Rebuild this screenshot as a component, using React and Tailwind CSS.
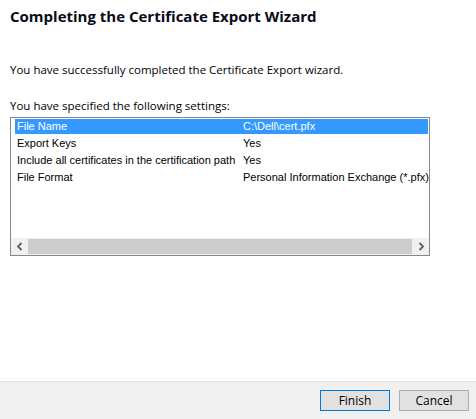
import React from 'react';

const settings = [
  { name: 'File Name', value: 'C:\\Dell\\cert.pfx' },
  { name: 'Export Keys', value: 'Yes' },
  { name: 'Include all certificates in the certification path', value: 'Yes' },
  { name: 'File Format', value: 'Personal Information Exchange (*.pfx)' },
];

const Arrow = ({ dir }) => (
  <svg width="8" height="9" viewBox="0 0 8 9" className="text-[#606060]">
    {dir === 'left' ? (
      <path d="M5.5 1 L2 4.5 L5.5 8" fill="none" stroke="currentColor" strokeWidth="1.8" />
    ) : (
      <path d="M2.5 1 L6 4.5 L2.5 8" fill="none" stroke="currentColor" strokeWidth="1.8" />
    )}
  </svg>
);

export default function App() {
  return (
    <div className="w-[476px] h-[419px] flex flex-col bg-white font-['Open_Sans',sans-serif] text-black">
      <div className="flex-1 pl-[10px]">
        <h1 className="mt-[5px] text-[15px] font-bold leading-[22px] text-[#0a0a1a]">
          Completing the Certificate Export Wizard
        </h1>
        <p className="mt-[35px] text-[11.5px] leading-[16px]">
          You have successfully completed the Certificate Export wizard.
        </p>
        <p className="mt-[20px] text-[11.5px] leading-[16px]">You have specified the following settings:</p>

        {/* settings list view */}
        <div className="mt-[3px] w-[420px] h-[139px] border border-[#828790] flex flex-col font-['Liberation_Sans',sans-serif] text-[11px]">
          <div className="flex-1 pl-[4px] pr-[1px] overflow-hidden">
            {settings.map((row, i) => (
              <div key={i} className="h-[17px] flex items-center whitespace-nowrap">
                <div className={`flex w-full h-[15px] items-center ${i === 0 ? 'bg-[#3399ff] text-white' : ''}`}>
                  <span className="w-[228px] pl-[2px] shrink-0">{row.name}</span>
                  <span>{row.value}</span>
                </div>
              </div>
            ))}
          </div>
          <div className="h-[17px] flex bg-[#f0f0f0]">
            <div className="w-[17px] flex items-center justify-center">
              <Arrow dir="left" />
            </div>
            <div className="flex-1 my-[1px] bg-[#cdcdcd]" />
            <div className="w-[17px] flex items-center justify-center">
              <Arrow dir="right" />
            </div>
          </div>
        </div>
      </div>

      <div className="h-[38px] border-t border-[#dfdfdf] bg-[#f0f0f0] flex items-center justify-end gap-[9px] pr-[7px] text-[12px]">
        <button className="w-[70px] h-[21px] border border-[#0078d7] bg-[#e1e1e1] leading-none">Finish</button>
        <button className="w-[70px] h-[21px] border border-[#adadad] bg-[#e1e1e1] leading-none">Cancel</button>
      </div>
    </div>
  );
}
